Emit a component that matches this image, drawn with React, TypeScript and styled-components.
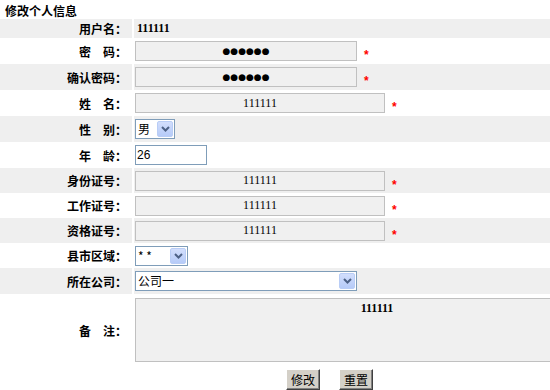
import styled, { createGlobalStyle } from 'styled-components';

const GlobalStyle = createGlobalStyle`
  html, body {
    margin: 0;
    padding: 0;
    overflow: hidden;
    background: #fff;
  }
  body {
    font-family: "Noto Sans CJK SC", "Liberation Sans", sans-serif;
    font-size: 12px;
    color: #000;
  }
`;

const Page = styled.div`
  width: 550px;
`;

const Title = styled.div`
  height: 19px;
  box-sizing: border-box;
  padding: 4px 0 0 5px;
  line-height: 14px;
  font-weight: bold;
`;

const Row = styled.div<{ $alt?: boolean; $h: number }>`
  display: grid;
  grid-template-columns: 132px minmax(0, 1fr);
  column-gap: 2px;
  height: ${(p) => p.$h}px;
  background: #fff;

  & > div {
    background: ${(p) => (p.$alt ? '#efefef' : '#fff')};
  }
`;

const Label = styled.div`
  display: flex;
  align-items: center;
  justify-content: flex-end;
  padding-right: 5px;
  font-weight: bold;
  white-space: pre;
`;

const Value = styled.div`
  display: flex;
  align-items: center;
  padding-left: 1px;
  min-width: 0;
`;

const PlainValue = styled.span`
  margin-left: 2px;
  font-family: "Liberation Serif", serif;
  font-weight: bold;
  font-size: 12px;
`;

const Field = styled.input<{ $w: number; $dots?: boolean }>`
  flex: none;
  width: ${(p) => p.$w}px;
  height: 20px;
  box-sizing: border-box;
  margin: 0;
  padding: 0 2px;
  border: 1px solid #c0c0c0;
  background: #f0f0f0;
  color: #000;
  text-align: center;
  font-family: ${(p) => (p.$dots ? '"DejaVu Sans", sans-serif' : '"Liberation Serif", serif')};
  font-size: ${(p) => (p.$dots ? '9px' : '12px')};
  outline: none;
`;

const EditField = styled.input`
  flex: none;
  width: 72px;
  height: 20px;
  box-sizing: border-box;
  margin: 0;
  padding: 0 1px;
  border: 1px solid #7f9db9;
  background: #fff;
  font-family: "Liberation Sans", sans-serif;
  font-size: 12px;
  outline: none;
`;

const Required = styled.span`
  margin-left: 7px;
  color: #f00;
  font-family: "Liberation Sans", sans-serif;
  font-weight: bold;
  font-size: 12px;
  position: relative;
  top: 4px;
`;

const SelectBox = styled.div<{ $w: number }>`
  flex: none;
  width: ${(p) => p.$w}px;
  height: 20px;
  box-sizing: border-box;
  border: 1px solid #7f9db9;
  background: #fff;
  display: flex;
  align-items: center;
  justify-content: space-between;
  padding-left: 2px;
  font-size: 12px;
`;

const SelectText = styled.span`
  line-height: 16px;
`;

const DropButton = styled.span`
  width: 16px;
  height: 16px;
  margin-right: 1px;
  box-sizing: border-box;
  border: 1px solid #b9cdf6;
  border-radius: 2px;
  background: linear-gradient(#d2defc, #b6cbf8);
  display: flex;
  align-items: center;
  justify-content: center;
`;

const Memo = styled.textarea`
  flex: none;
  width: 415px;
  height: 64px;
  box-sizing: border-box;
  margin: 0;
  padding: 2px 0 2px 68px;
  border: 1px solid #c0c0c0;
  border-right: none;
  background: #f0f0f0;
  text-align: center;
  font-family: "Liberation Serif", serif;
  font-weight: bold;
  font-size: 12px;
  resize: none;
  outline: none;
  overflow: hidden;
`;

const MemoValue = styled(Value)`
  align-items: flex-start;
  padding-top: 4px;
`;

const Buttons = styled.div`
  display: flex;
  gap: 19px;
  padding: 3px 0 0 286px;
`;

const Button = styled.button`
  width: 34px;
  height: 21px;
  box-sizing: border-box;
  margin: 0;
  padding: 0;
  background: #d4d0c8;
  border: 1px solid;
  border-color: #fff #404040 #404040 #fff;
  box-shadow: inset -1px -1px 0 #808080;
  font-family: "Noto Sans CJK SC", sans-serif;
  font-size: 12px;
  color: #000;
`;

function Chevron() {
  return (
    <svg width="9" height="6" viewBox="0 0 9 6">
      <path d="M1 1 L4.5 4.5 L8 1" fill="none" stroke="#4d6185" strokeWidth="2" />
    </svg>
  );
}

function Select({ width, text }: { width: number; text: string }) {
  return (
    <SelectBox $w={width}>
      <SelectText>{text}</SelectText>
      <DropButton>
        <Chevron />
      </DropButton>
    </SelectBox>
  );
}

function App() {
  return (
    <Page>
      <GlobalStyle />
      <Title>修改个人信息</Title>

      <Row $alt $h={19}>
        <Label>用户名：</Label>
        <Value>
          <PlainValue>111111</PlainValue>
        </Value>
      </Row>

      <Row $h={26}>
        <Label>密　码：</Label>
        <Value>
          <Field $w={222} $dots readOnly value="●●●●●●" />
          <Required>*</Required>
        </Value>
      </Row>

      <Row $alt $h={26}>
        <Label>确认密码：</Label>
        <Value>
          <Field $w={222} $dots readOnly value="●●●●●●" />
          <Required>*</Required>
        </Value>
      </Row>

      <Row $h={26}>
        <Label>姓　名：</Label>
        <Value>
          <Field $w={250} readOnly value="111111" />
          <Required>*</Required>
        </Value>
      </Row>

      <Row $alt $h={26}>
        <Label>性　别：</Label>
        <Value>
          <Select width={40} text="男" />
        </Value>
      </Row>

      <Row $h={26}>
        <Label>年　龄：</Label>
        <Value>
          <EditField defaultValue="26" />
        </Value>
      </Row>

      <Row $alt $h={25}>
        <Label>身份证号：</Label>
        <Value>
          <Field $w={250} readOnly value="111111" />
          <Required>*</Required>
        </Value>
      </Row>

      <Row $h={25}>
        <Label>工作证号：</Label>
        <Value>
          <Field $w={250} readOnly value="111111" />
          <Required>*</Required>
        </Value>
      </Row>

      <Row $alt $h={25}>
        <Label>资格证号：</Label>
        <Value>
          <Field $w={250} readOnly value="111111" />
          <Required>*</Required>
        </Value>
      </Row>

      <Row $h={25}>
        <Label>县市区域：</Label>
        <Value>
          <Select width={53} text="* *" />
        </Value>
      </Row>

      <Row $alt $h={26}>
        <Label>所在公司：</Label>
        <Value>
          <Select width={222} text="公司一" />
        </Value>
      </Row>

      <Row $h={72}>
        <Label>备　注：</Label>
        <MemoValue>
          <Memo readOnly value="111111" />
        </MemoValue>
      </Row>

      <Buttons>
        <Button>修改</Button>
        <Button>重置</Button>
      </Buttons>
    </Page>
  );
}

export default App;
